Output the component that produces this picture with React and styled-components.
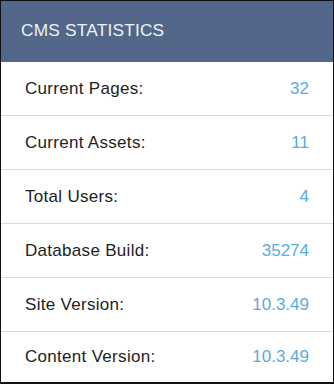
import React from 'react';
import styled, { createGlobalStyle } from 'styled-components';

const GlobalStyle = createGlobalStyle`
  * {
    box-sizing: border-box;
  }

  body {
    margin: 0;
    background: #ffffff;
    font-family: "Liberation Sans", Arial, sans-serif;
  }
`;

const Panel = styled.div`
  width: 334px;
  height: 384px;
  display: flex;
  flex-direction: column;
  border: 1px solid #111111;
  border-bottom-width: 2px;
  background: #ffffff;
  overflow: hidden;
`;

const Header = styled.div`
  height: 61px;
  flex-shrink: 0;
  display: flex;
  align-items: center;
  padding: 0 20px 3px;
  background: #526789;
  color: #eef1f5;
  font-size: 17.3px;
  letter-spacing: 0.2px;
`;

const Row = styled.div`
  height: ${(p) => (p.$last ? 'auto' : '54px')};
  flex: ${(p) => (p.$last ? '1' : '0 0 auto')};
  display: flex;
  align-items: center;
  justify-content: space-between;
  padding: 0 24px;
  border-bottom: ${(p) => (p.$last ? 'none' : '1px solid #dcdcdc')};
  font-size: 17px;
`;

const Label = styled.span`
  color: #222222;
  letter-spacing: 0.3px;
`;

const Value = styled.span`
  color: #59ace2;
`;

const stats = [
  { label: 'Current Pages:', value: '32' },
  { label: 'Current Assets:', value: '11' },
  { label: 'Total Users:', value: '4' },
  { label: 'Database Build:', value: '35274' },
  { label: 'Site Version:', value: '10.3.49' },
  { label: 'Content Version:', value: '10.3.49' },
];

const App = () => (
  <>
    <GlobalStyle />
    <Panel>
      <Header>CMS STATISTICS</Header>
      {stats.map((s, i) => (
        <Row key={s.label} $last={i === stats.length - 1}>
          <Label>{s.label}</Label>
          <Value>{s.value}</Value>
        </Row>
      ))}
    </Panel>
  </>
);

export default App;
